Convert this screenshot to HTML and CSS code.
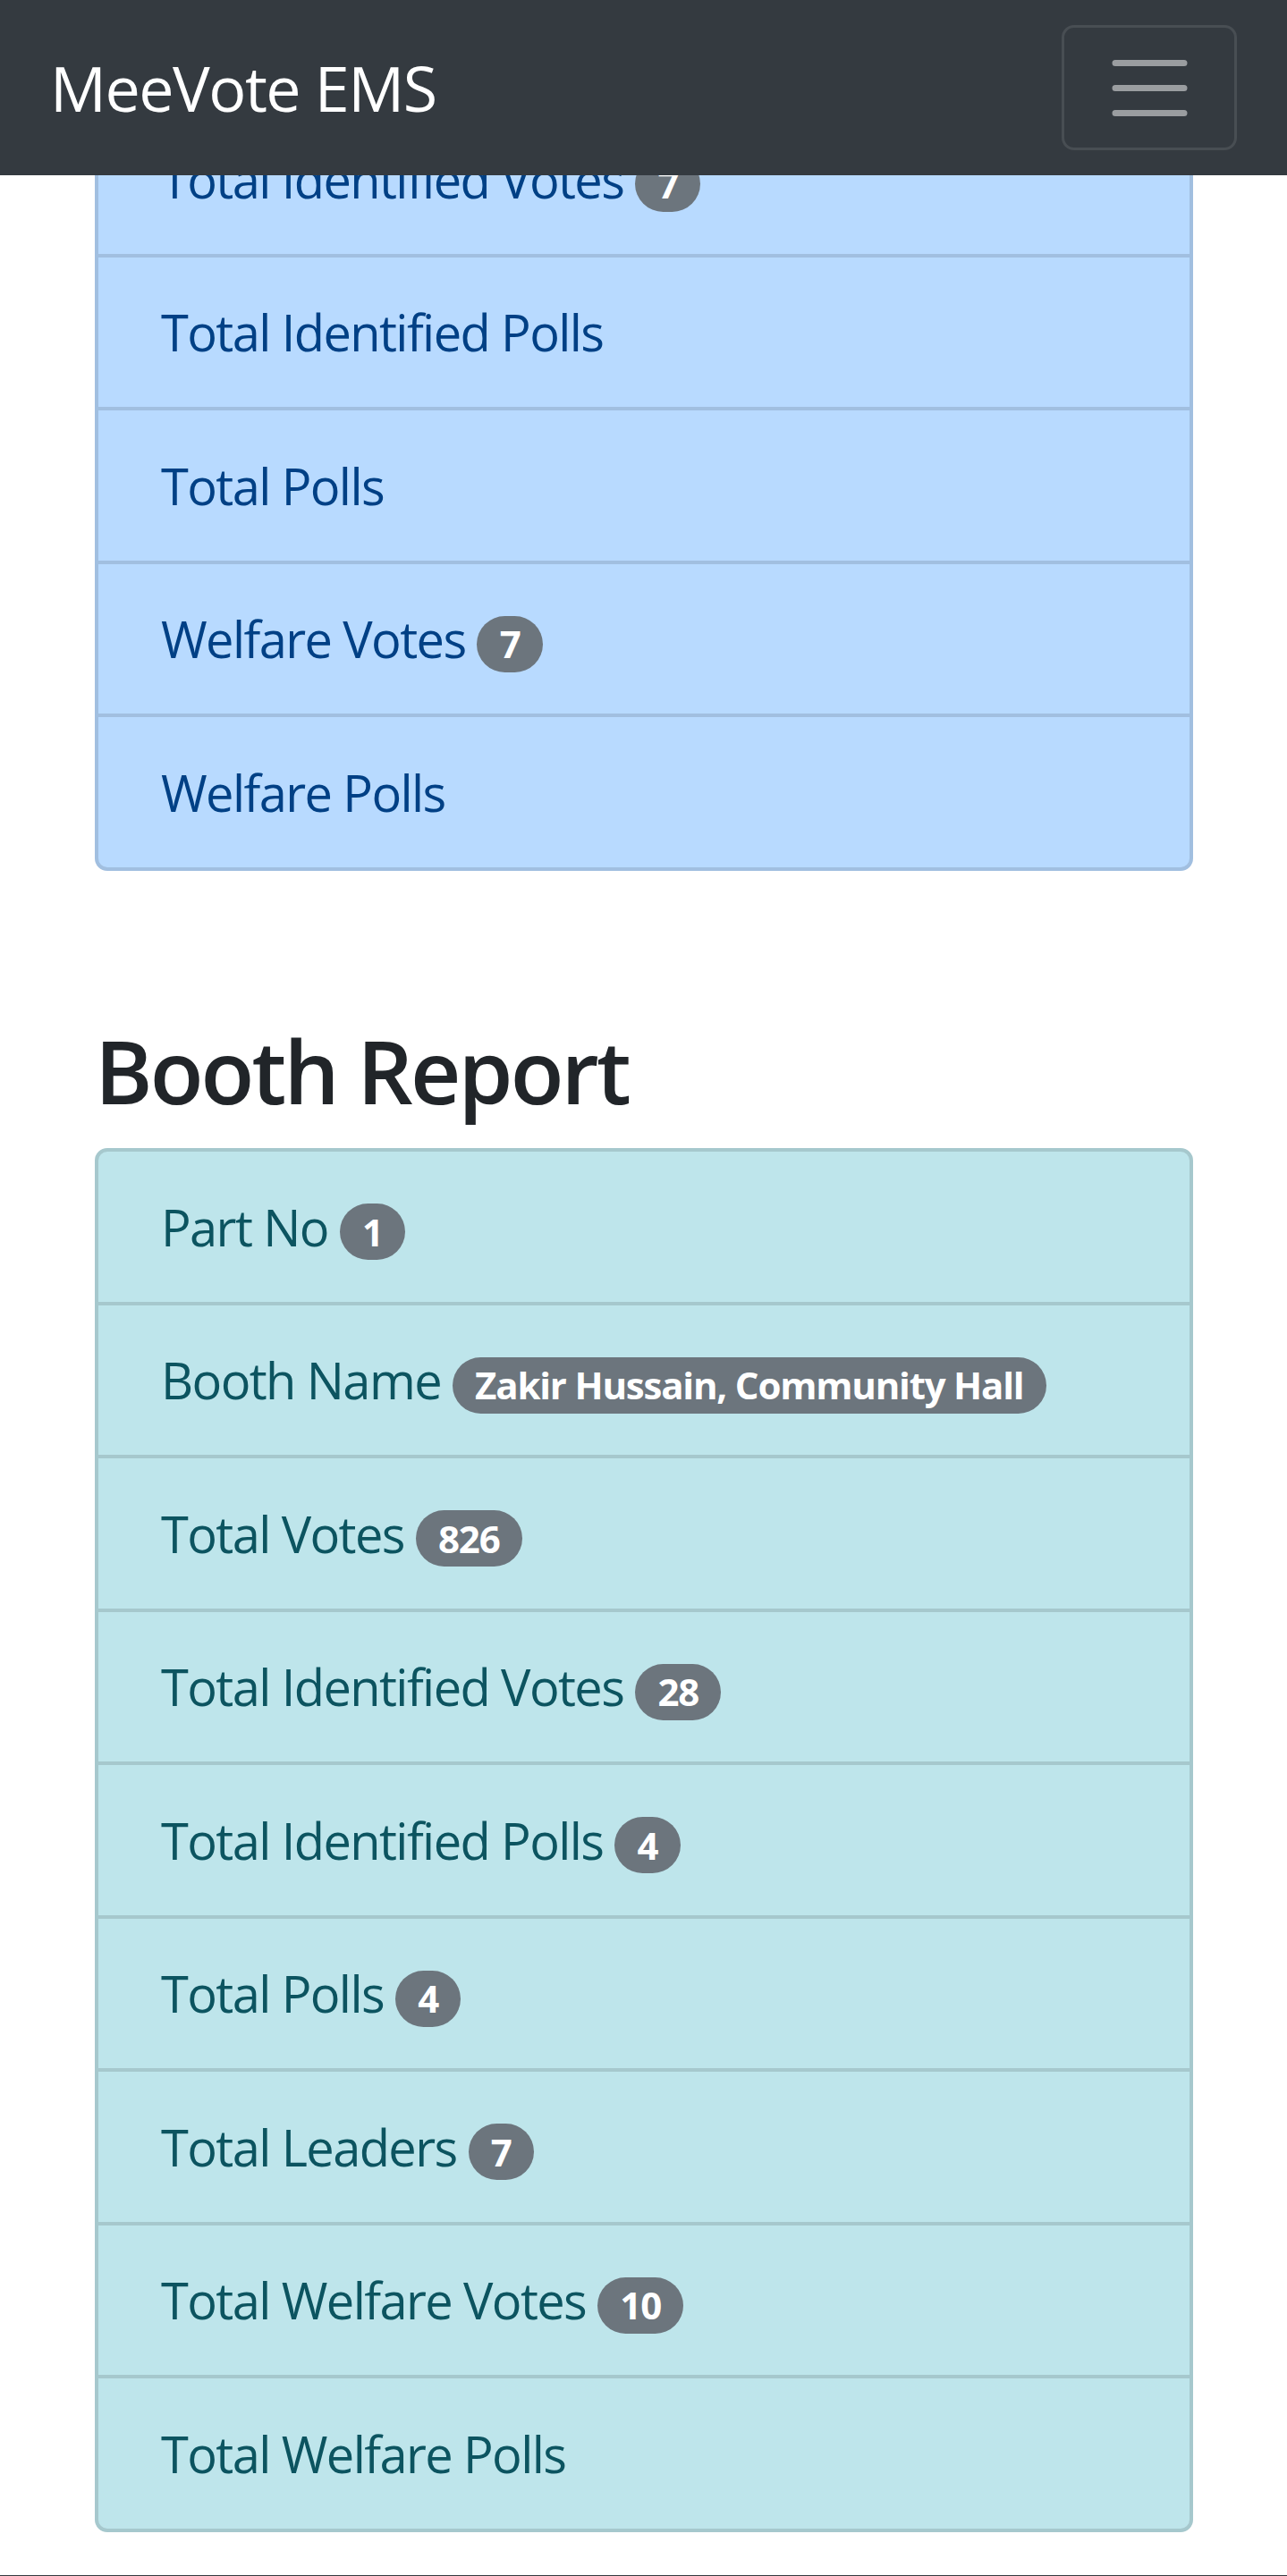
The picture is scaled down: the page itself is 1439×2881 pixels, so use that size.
FILE: index.html
```html
<!DOCTYPE html>
<html lang="en">
<head>
<meta charset="utf-8">
<title>MeeVote EMS</title>
<link rel="stylesheet" href="styles.css">
</head>
<body>
<nav class="navbar">
  <a class="brand" href="#">MeeVote EMS</a>
  <button class="toggler" type="button" aria-label="Toggle navigation">
    <svg class="toggler-icon" viewBox="0 0 30 30" width="105" height="105"><path d="M4 7h22M4 15h22M4 23h22" stroke="rgba(255,255,255,0.5)" stroke-width="2" stroke-linecap="round" stroke-miterlimit="10" fill="none"/></svg>
  </button>
</nav>
<main class="container">
  <ul class="list list-primary">
    <li class="item">Total Identified Votes <span class="badge">7</span></li>
    <li class="item">Total Identified Polls</li>
    <li class="item">Total Polls</li>
    <li class="item">Welfare Votes <span class="badge">7</span></li>
    <li class="item">Welfare Polls</li>
  </ul>
  <h3 class="section-title">Booth Report</h3>
  <ul class="list list-info">
    <li class="item">Part No <span class="badge">1</span></li>
    <li class="item">Booth Name <span class="badge">Zakir Hussain, Community Hall</span></li>
    <li class="item">Total Votes <span class="badge">826</span></li>
    <li class="item">Total Identified Votes <span class="badge">28</span></li>
    <li class="item">Total Identified Polls <span class="badge">4</span></li>
    <li class="item">Total Polls <span class="badge">4</span></li>
    <li class="item">Total Leaders <span class="badge">7</span></li>
    <li class="item">Total Welfare Votes <span class="badge">10</span></li>
    <li class="item">Total Welfare Polls</li>
  </ul>
</main>
<footer class="footer"></footer>
</body>
</html>
```
FILE: styles.css
```css
* { box-sizing: border-box; }
html, body { margin: 0; padding: 0; }
body {
  font-family: "Open Sans", "Noto Sans", "Liberation Sans", sans-serif;
  font-size: 56px;
  line-height: 1.5;
  color: #212529;
  background: #fff;
}
.navbar {
  position: fixed;
  top: 0; left: 0; right: 0;
  z-index: 10;
  height: 196px;
  background: #343a40;
  padding: 28px 56px;
  display: flex;
  align-items: center;
  justify-content: space-between;
}
.brand {
  color: #fff;
  text-decoration: none;
  font-size: 70px;
  line-height: 105px;
  letter-spacing: -1.5px;
  padding: 17.5px 0;
  white-space: nowrap;
}
.toggler {
  width: 196px;
  height: 140px;
  padding: 14px 42px;
  background: transparent;
  border: 3.5px solid rgba(255,255,255,0.1);
  border-radius: 14px;
  display: flex;
  align-items: center;
  justify-content: center;
}
.toggler-icon { display: block; width: 105px; height: 105px; }
.container {
  padding: 112px 105px 0 106px;
}
.list {
  list-style: none;
  margin: 0;
  padding: 0;
  border: 4px solid rgba(0,0,0,0.125);
  border-radius: 14px;
  overflow: hidden;
}
.item {
  padding: 41.75px 70px;
  line-height: 84px;
  letter-spacing: -1.6px;
  white-space: nowrap;
}
.item + .item { border-top: 4px solid rgba(0,0,0,0.125); }
.list-primary { background: #b8daff; color: #004085; border-color: #a1bfe0; }
.list-primary .item + .item { border-top-color: #a1bfe0; }
.list-info { background: #bee5eb; color: #0c5460; border-color: #a6c8cd; }
.list-info .item + .item { border-top-color: #a6c8cd; }
.section-title {
  margin: 165px 0 28px;
  font-size: 98px;
  font-weight: 600;
  line-height: 1.2;
  letter-spacing: -2.9px;
  color: #212529;
}
.badge {
  display: inline-block;
  font-size: 42px;
  font-weight: 700;
  line-height: 1;
  letter-spacing: -1.2px;
  padding: 10.5px 25.2px;
  border-radius: 560px;
  background: #6c757d;
  color: #fff;
  vertical-align: baseline;
  white-space: nowrap;
}
.footer {
  margin-top: 48px;
  height: 200px;
  background: #343a40;
}
```
